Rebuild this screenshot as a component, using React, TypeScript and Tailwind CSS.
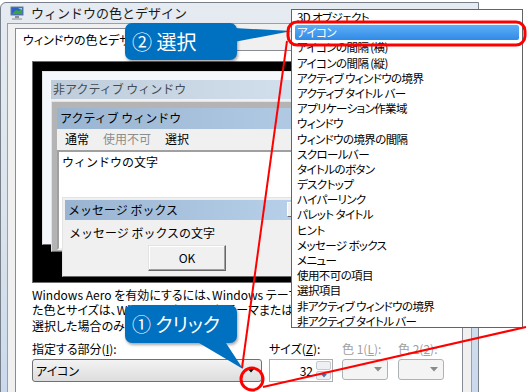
import React from 'react';

const ITEMS = [
  '3D オブジェクト',
  'アイコン',
  'アイコンの間隔 (横)',
  'アイコンの間隔 (縦)',
  'アクティブ ウィンドウの境界',
  'アクティブ タイトル バー',
  'アプリケーション作業域',
  'ウィンドウ',
  'ウィンドウの境界の間隔',
  'スクロールバー',
  'タイトルのボタン',
  'デスクトップ',
  'ハイパーリンク',
  'パレット タイトル',
  'ヒント',
  'メッセージ ボックス',
  'メニュー',
  '使用不可の項目',
  '選択項目',
  '非アクティブ ウィンドウの境界',
  '非アクティブ タイトル バー',
];

function MonitorIcon() {
  return (
    <svg width="14" height="14" viewBox="0 0 14 14">
      <rect x="0.5" y="0.5" width="13" height="9" fill="#6b7c8f" />
      <rect x="1.5" y="1.5" width="11" height="7" fill="#2a62c8" />
      <path d="M2 8 L6 4 L9 5 L12 2 L12 8 Z" fill="#3aa53a" />
      <path d="M8 2 L12 2 L12 4 Z" fill="#8fd0ff" />
      <rect x="5" y="10" width="4" height="2" fill="#8a8f96" />
      <rect x="2" y="12" width="10" height="2" fill="#b5bac0" />
    </svg>
  );
}

function Arrow({ color = '#000' }: { color?: string }) {
  return (
    <svg width="8" height="5" viewBox="0 0 8 5">
      <path d="M0 0 H8 L4 4.5 Z" fill={color} />
    </svg>
  );
}

function Preview() {
  return (
    <div className="relative h-[222px] bg-black border border-[#6d6d6d] overflow-hidden text-[12px] leading-none [font-feature-settings:normal]">
      {/* inactive window */}
      <div className="absolute left-[9px] top-[9px] w-[330px] h-[174px] bg-[#f4f7fc] border border-[#e3e3e3] border-r-[#696969] border-b-[#696969] p-[8px]">
        <div className="h-[19px] flex items-center pl-[2px] bg-gradient-to-r from-[#bfcddb] to-[#d7e4f2] text-[#434e54]">
          非アクティブ ウィンドウ
        </div>
        <div className="h-[140px] bg-[#f0f0f0]" />
      </div>

      {/* active window */}
      <div className="absolute left-[18px] top-[39px] w-[330px] h-[151px] bg-[#b4b4b4] border border-[#e3e3e3] border-r-[#696969] border-b-[#696969] px-[5px] pt-[6px]">
        <div className="h-[21px] flex items-center pl-[3px] bg-gradient-to-r from-[#99b4d1] to-[#b9d1ea] text-black">
          アクティブ ウィンドウ
        </div>
        <div className="h-[21px] flex items-center bg-[#f0f0f0] pl-[8px]">
          <span>通常</span>
          <span className="ml-[14px] text-[#8d8d8d]">使用不可</span>
          <span className="ml-[14px]">選択</span>
        </div>
        <div className="h-[100px] bg-white border-2 border-[#a0a0a0] border-r-[#f0f0f0] border-b-[#f0f0f0] pl-[3px] pt-[4px]">
          ウィンドウの文字
        </div>
      </div>

      {/* message box */}
      <div className="absolute left-[29px] top-[135px] w-[245px] h-[80px] bg-[#f0f0f0] border border-[#e3e3e3] border-r-[#696969] border-b-[#696969] px-[2px] pt-[2px]">
        <div className="h-[20px] flex items-center justify-between pl-[3px] pr-[1px] bg-gradient-to-r from-[#99b4d1] to-[#b9d1ea]">
          <span>メッセージ ボックス</span>
          <span className="w-[16px] h-[15px] bg-[#f0f0f0] border border-[#ffffff] border-r-[#696969] border-b-[#696969]" />
        </div>
        <div className="pl-[4px] pt-[7px] h-[25px]">メッセージ ボックスの文字</div>
        <div className="ml-[83px] w-[78px] h-[26px] flex items-center justify-center border border-[#e3e3e3] border-r-[#696969] border-b-[#696969] shadow-[inset_-1px_-1px_0_#a0a0a0,inset_1px_1px_0_#ffffff] bg-[#f0f0f0]">
          OK
        </div>
      </div>
    </div>
  );
}

export default function App() {
  return (
    <div className="relative w-[531px] h-[392px] overflow-hidden bg-white text-black font-['Noto_Sans_CJK_JP','Noto_Sans',sans-serif] [font-feature-settings:'palt']">
      {/* dialog */}
      <div className="flex flex-col w-[479px] h-[420px] mt-[2px] rounded-tl-[6px] border border-[#77808b] bg-gradient-to-b from-[#e6ebf1] via-[#dbe3ec] to-[#c7d8ec]">
        <div className="flex items-center h-[28px] pl-[9px] gap-[7px]">
          <MonitorIcon />
          <span className="text-[13px] text-[#1b1b1b] [font-feature-settings:normal]">ウィンドウの色とデザイン</span>
        </div>
        <div className="flex-1 mx-[6px] border border-[#97a1ad] bg-[#f0f0f0] pt-[4px]">
          <div className="relative ml-[7px] -mb-px w-[140px] h-[23px] border border-b-0 border-[#898c95] bg-white pl-[7px] text-[12px] leading-[22px] whitespace-nowrap overflow-hidden">
            ウィンドウの色とデザイン
          </div>
          <div className="ml-[7px] w-[448px] h-[400px] border border-[#898c95] bg-white px-[16px] pt-[10px]">
            <Preview />
            <p className="mt-[4px] text-[12px] leading-[15.5px] whitespace-nowrap overflow-hidden">
              Windows Aero を有効にするには、Windows テーマを選択してください。ここで選択し
              <br />
              た色とサイズは、Windows クラシック テーマまたはコントラストの高いテーマを
              <br />
              選択した場合のみに適用されます。
            </p>
            <div className="flex mt-[8px] text-[12px] leading-[15px]">
              <div className="flex flex-col w-[230px]">
                <span>
                  指定する部分(<span className="underline">I</span>):
                </span>
                <div className="mt-[3px] h-[23px] flex items-center justify-between rounded-[3px] border border-[#707070] bg-gradient-to-b from-[#f3f3f3] to-[#dddddd] pl-[3px] pr-[6px]">
                  <span>アイコン</span>
                  <Arrow />
                </div>
              </div>
              <div className="flex flex-col w-[64px] ml-[7px]">
                <span>
                  サイズ(<span className="underline">Z</span>):
                </span>
                <div className="mt-[3px] h-[23px] flex items-center justify-end border border-[#abadb3] bg-white pr-[1px]">
                  <span className="mr-[3px]">32</span>
                  <div className="flex flex-col w-[15px] h-[19px] gap-[1px]">
                    <div className="flex-1 rounded-[2px] border border-[#c4c9d0] bg-[#eef0f3]" />
                    <div className="flex-1 flex items-center justify-center rounded-[2px] border border-[#c4c9d0] bg-[#eef0f3]">
                      <svg width="6" height="4" viewBox="0 0 6 4">
                        <path d="M0 0 H6 L3 3.5 Z" fill="#4b6ea8" />
                      </svg>
                    </div>
                  </div>
                </div>
              </div>
              <div className="flex flex-col w-[46px] ml-[9px] text-[#a0a0a0]">
                <span className="whitespace-nowrap">
                  色 1(<span className="underline">L</span>):
                </span>
                <div className="mt-[3px] h-[21px] flex items-center justify-end rounded-[3px] border border-[#adb2b5] bg-[#f4f4f4] pr-[5px]">
                  <Arrow color="#8a8a8a" />
                </div>
              </div>
              <div className="flex flex-col w-[46px] ml-[10px] text-[#a0a0a0]">
                <span className="whitespace-nowrap">
                  色 2(<span className="underline">2</span>):
                </span>
                <div className="mt-[3px] h-[21px] flex items-center justify-end rounded-[3px] border border-[#adb2b5] bg-[#f4f4f4] pr-[5px]">
                  <Arrow color="#8a8a8a" />
                </div>
              </div>
            </div>
          </div>
        </div>
      </div>

      {/* open dropdown list */}
      <div className="absolute z-20 left-[291px] top-[9px] w-[232px] h-[319px] border border-[#646464] bg-white px-[3px] overflow-hidden text-[11.5px] tracking-[-0.6px]">
        {ITEMS.map((item, i) => (
          <div
            key={item}
            className={
              i === 1
                ? 'h-[15.2px] leading-[15.2px] pl-[2px] whitespace-nowrap rounded-[2px] bg-gradient-to-b from-[#5eaef6] to-[#2f8be6] text-white'
                : 'h-[15.2px] leading-[15.2px] pl-[2px] whitespace-nowrap'
            }
          >
            {item}
          </div>
        ))}
      </div>

      {/* callouts */}
      <div className="absolute z-30 left-[125px] top-[23px] w-[112px] h-[37px] rounded-[7px] bg-[#0070c0] shadow-[1px_2px_3px_rgba(0,0,0,0.35)] pl-[7px] flex items-center text-white text-[20px] whitespace-nowrap">
        ② 選択
      </div>
      <div className="absolute z-30 left-[125px] top-[305px] w-[112px] h-[38px] rounded-[7px] bg-[#0070c0] shadow-[1px_2px_3px_rgba(0,0,0,0.35)] pl-[7px] flex items-center text-white text-[19px] whitespace-nowrap">
        ① クリック
      </div>

      <svg className="absolute z-40 inset-0 pointer-events-none" width="531" height="392" viewBox="0 0 531 392">
        <polygon points="234,28 292,31 234,42" fill="#0070c0" />
        <polygon points="194,340 243,369 224,340" fill="#0070c0" />
        <rect x="288" y="22" width="237" height="23" rx="9" fill="none" stroke="#ff0000" strokeWidth="3" />
        <line x1="287" y1="41" x2="242" y2="368" stroke="#ff0000" strokeWidth="2" />
        <line x1="263" y1="387" x2="526" y2="327" stroke="#ff0000" strokeWidth="2" />
        <circle cx="252" cy="379" r="11" fill="none" stroke="#ff0000" strokeWidth="3" />
      </svg>
    </div>
  );
}
